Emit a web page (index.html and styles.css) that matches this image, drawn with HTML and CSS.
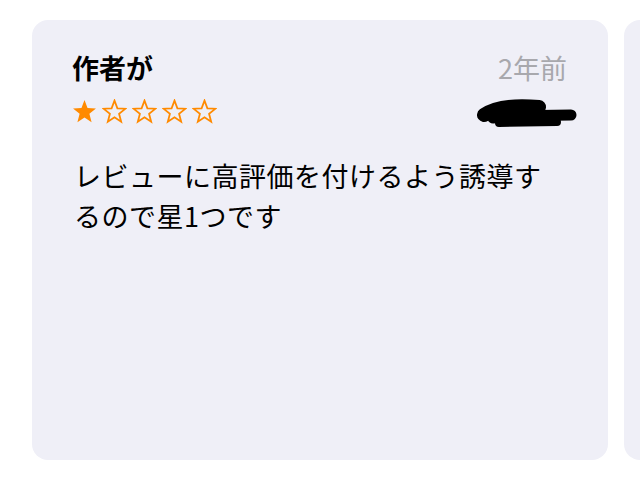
FILE: index.html
```html
<!DOCTYPE html>
<html lang="ja">
<head>
<meta charset="utf-8">
<link rel="stylesheet" href="styles.css">
</head>
<body>
<div class="track">
  <div class="card">
    <div class="head">
      <div class="left">
        <div class="title">作者が</div>
        <div class="stars">
          <svg class="star" viewBox="0 0 24 24"><polygon class="fill" points="12,1 14.9,8.6 23,9 16.7,14.1 18.8,22.4 12,17.8 5.2,22.4 7.3,14.1 1,9 9.1,8.6"/></svg>
          <svg class="star" viewBox="0 0 24 24"><polygon class="line" points="12,1.5 14.8,8.9 22.5,9.3 16.4,14.2 18.4,21.8 12,17.5 5.6,21.8 7.6,14.2 1.5,9.3 9.2,8.9"/></svg>
          <svg class="star" viewBox="0 0 24 24"><polygon class="line" points="12,1.5 14.8,8.9 22.5,9.3 16.4,14.2 18.4,21.8 12,17.5 5.6,21.8 7.6,14.2 1.5,9.3 9.2,8.9"/></svg>
          <svg class="star" viewBox="0 0 24 24"><polygon class="line" points="12,1.5 14.8,8.9 22.5,9.3 16.4,14.2 18.4,21.8 12,17.5 5.6,21.8 7.6,14.2 1.5,9.3 9.2,8.9"/></svg>
          <svg class="star" viewBox="0 0 24 24"><polygon class="line" points="12,1.5 14.8,8.9 22.5,9.3 16.4,14.2 18.4,21.8 12,17.5 5.6,21.8 7.6,14.2 1.5,9.3 9.2,8.9"/></svg>
        </div>
      </div>
      <div class="right">
        <div class="date">2年前</div>
        <svg class="scribble" viewBox="0 0 100 30">
          <path d="M7 16 C 18 8, 40 6, 62 8" stroke-width="14"/>
          <path d="M16 19 C 40 17, 70 16, 94 16" stroke-width="11"/>
          <path d="M22 24 L 80 23" stroke-width="8"/>
          <path d="M48 3 L 58 4" stroke-width="4"/>
        </svg>
      </div>
    </div>
    <p class="body">レビューに高評価を付けるよう誘導するので星1つです</p>
  </div>
  <div class="card peek"></div>
</div>
</body>
</html>
```
FILE: styles.css
```css
html, body {
  margin: 0;
  padding: 0;
  background: #ffffff;
  overflow: hidden;
  width: 640px;
  height: 488px;
}
.track {
  display: flex;
  gap: 16px;
  padding: 20px 0 0 32px;
}
.card {
  flex: 0 0 576px;
  height: 440px;
  box-sizing: border-box;
  background: #efeff7;
  border-radius: 16px;
  padding: 28px 41px 0 40px;
  font-family: "Noto Sans CJK JP", "Noto Sans", sans-serif;
  color: #000;
}
.card.peek {
  flex: 0 0 16px;
  padding: 0;
  border-radius: 16px 0 0 16px;
}
.head {
  display: flex;
  justify-content: space-between;
}
.left, .right {
  display: flex;
  flex-direction: column;
}
.right {
  align-items: flex-end;
}
.title {
  font-size: 27px;
  font-weight: 700;
  line-height: 40px;
}
.stars {
  display: flex;
  gap: 5px;
  margin-top: 11px;
}
.star {
  width: 25px;
  height: 25px;
}
.star .fill {
  fill: #ff8a00;
}
.star .line {
  fill: none;
  stroke: #ff8a00;
  stroke-width: 1.7;
}
.date {
  font-size: 27px;
  line-height: 40px;
  color: #a8a8ad;
}
.scribble {
  width: 100px;
  height: 30px;
  margin-top: 11px;
  margin-right: -10px;
}
.scribble path {
  fill: none;
  stroke: #000;
  stroke-linecap: round;
  stroke-linejoin: round;
}
.body {
  margin: 27px 0 0 2px;
  font-size: 27px;
  line-height: 40px;
  letter-spacing: 0.5px;
}
```
